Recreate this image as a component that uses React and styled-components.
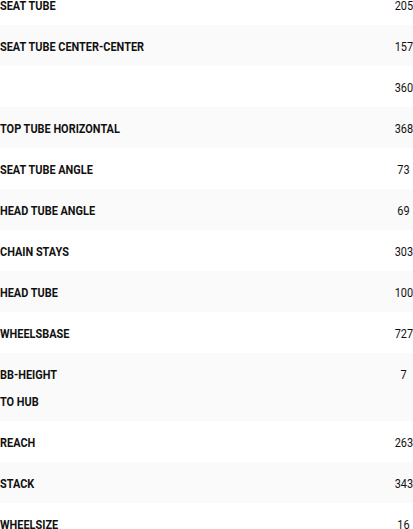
import React from 'react';
import styled, { createGlobalStyle } from 'styled-components';

const GlobalStyle = createGlobalStyle`
  body {
    margin: 0;
    background: #fff;
    overflow: hidden;
  }
`;

const specs = [
  { label: ['SEAT TUBE'], value: '205' },
  { label: ['SEAT TUBE CENTER-CENTER'], value: '157' },
  { label: [''], value: '360' },
  { label: ['TOP TUBE HORIZONTAL'], value: '368' },
  { label: ['SEAT TUBE ANGLE'], value: '73' },
  { label: ['HEAD TUBE ANGLE'], value: '69' },
  { label: ['CHAIN STAYS'], value: '303' },
  { label: ['HEAD TUBE'], value: '100' },
  { label: ['WHEELSBASE'], value: '727' },
  { label: ['BB-HEIGHT', 'TO HUB'], value: '7' },
  { label: ['REACH'], value: '263' },
  { label: ['STACK'], value: '343' },
  { label: ['WHEELSIZE'], value: '16' },
];

// the reference uses a condensed face; Roboto squeezed horizontally stands in for it
const Table = styled.div`
  margin-top: -16px;
  width: 414px;
  font-family: Roboto, "Liberation Sans", sans-serif;
  font-size: 13px;
  color: #111;
`;

const Row = styled.div`
  display: flex;
  align-items: flex-start;
  padding: 8px 0 6px;
  background: ${(p) => (p.$shaded ? '#fafafa' : '#fff')};
`;

const Label = styled.div`
  flex: 1;
  font-weight: 700;
  line-height: 27px;
  transform: scaleX(0.84);
  transform-origin: left center;
`;

const Value = styled.div`
  width: 21px;
  text-align: center;
  line-height: 27px;
  transform: scaleX(0.84);
`;

export default function App() {
  return (
    <>
      <GlobalStyle />
      <Table>
        {specs.map((s, i) => (
          <Row key={i} $shaded={i % 2 === 1}>
            <Label>
              {s.label.map((l, j) => (
                <div key={j}>{l || '\u00a0'}</div>
              ))}
            </Label>
            <Value>{s.value}</Value>
          </Row>
        ))}
      </Table>
    </>
  );
}
